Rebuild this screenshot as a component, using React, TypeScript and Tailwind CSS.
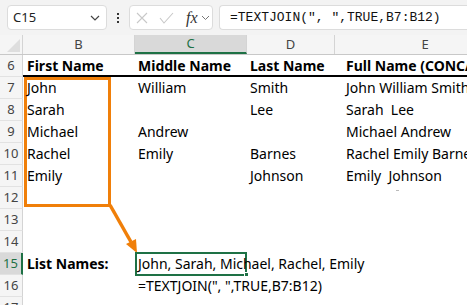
import React from "react";

const font = { fontFamily: "'Noto Sans', 'Open Sans', sans-serif" };

const rows: { n: number; b?: string; c?: string; d?: string; e?: string; bold?: boolean; boldB?: boolean }[] = [
  { n: 6, b: "First Name", c: "Middle Name", d: "Last Name", e: "Full Name (CONCAT)", bold: true },
  { n: 7, b: "John", c: "William", d: "Smith", e: "John William Smith" },
  { n: 8, b: "Sarah", d: "Lee", e: "Sarah  Lee" },
  { n: 9, b: "Michael", c: "Andrew", e: "Michael Andrew" },
  { n: 10, b: "Rachel", c: "Emily", d: "Barnes", e: "Rachel Emily Barnes" },
  { n: 11, b: "Emily", d: "Johnson", e: "Emily  Johnson" },
  { n: 12 },
  { n: 13 },
  { n: 14 },
  { n: 15, b: "List Names:", c: "John, Sarah, Michael, Rachel, Emily", boldB: true },
  { n: 16, c: '=TEXTJOIN(", ",TRUE,B7:B12)' },
  { n: 17 },
];

function Cell({ text, bold, w, indent }: { text?: string; bold?: boolean; w: string; indent?: string }) {
  return (
    <div className={`${w} shrink-0 relative h-full`}>
      {text && (
        <span
          className={`absolute ${indent ?? "left-[4px]"} top-[1px] whitespace-pre text-[14px] leading-[20px] text-black z-10 ${bold ? "font-bold" : ""}`}
        >
          {text}
        </span>
      )}
    </div>
  );
}

export default function App() {
  return (
    <div className="w-[467px] h-[305px] overflow-hidden bg-white relative" style={font}>
      {/* toolbar */}
      <div className="h-[35px] bg-[#f3f3f3] flex items-center pl-[7px] gap-0">
        <div className="w-[100px] h-[25px] bg-white border border-[#dcdcdc] rounded-[4px] flex items-center justify-between pl-[5px] pr-[6px]">
          <span className="text-[13px] text-[#222]">C15</span>
          <svg width="10" height="6" viewBox="0 0 10 6"><path d="M1 1l4 4 4-4" fill="none" stroke="#444" strokeWidth="1.2" /></svg>
        </div>
        <div className="w-[22px] flex flex-col items-center gap-[2px]">
          <div className="w-[2px] h-[2px] bg-[#333]" />
          <div className="w-[2px] h-[2px] bg-[#333]" />
          <div className="w-[2px] h-[2px] bg-[#333]" />
        </div>
        <div className="w-[84px] h-[25px] bg-white border border-[#dcdcdc] rounded-[4px] flex items-center pl-[5px]">
          <svg width="14" height="14" viewBox="0 0 14 14"><path d="M2 2l10 10M12 2L2 12" stroke="#c8c8c8" strokeWidth="1.1" fill="none" /></svg>
          <svg className="ml-[10px]" width="15" height="12" viewBox="0 0 15 12"><path d="M1 6l4 5 9-10" stroke="#c8c8c8" strokeWidth="1.1" fill="none" /></svg>
          <span className="ml-[12px] italic text-[16px] text-[#333] leading-none" style={{ fontFamily: "'Liberation Serif', serif" }}>fx</span>
          <svg className="ml-[3px]" width="9" height="6" viewBox="0 0 9 6"><path d="M1 1l3.5 3.5L8 1" fill="none" stroke="#777" strokeWidth="1" /></svg>
        </div>
        <div className="ml-[6px] flex-1 h-[25px] bg-white border border-[#dcdcdc] rounded-l-[4px] border-r-0 flex items-center pl-[10px]">
          <span className="text-[13px] text-[#111] whitespace-nowrap" style={{ fontFamily: "'Liberation Mono', monospace" }}>
            =TEXTJOIN(", ",TRUE,B7:B12)
          </span>
        </div>
      </div>

      {/* column headers */}
      <div className="h-[20px] flex bg-[#f5f5f5] border-b border-[#c8c8c8] text-[13px] text-[#444]">
        <div className="w-[23px] shrink-0 border-r border-[#d4d4d4] relative">
          <svg className="absolute right-[2px] bottom-[2px]" width="13" height="13" viewBox="0 0 13 13"><path d="M13 0V13H0Z" fill="#dedede" /></svg>
        </div>
        <div className="w-[112px] shrink-0 border-r border-[#d4d4d4] flex items-center justify-center">B</div>
        <div className="w-[112px] shrink-0 border-r border-[#d4d4d4] bg-[#d9d9d9] border-b-2 border-b-[#1e7145] flex items-center justify-center text-[#1e7145]">C</div>
        <div className="w-[88px] shrink-0 border-r border-[#d4d4d4] flex items-center justify-center">D</div>
        <div className="w-[180px] shrink-0 flex items-center justify-center">E</div>
      </div>

      {/* rows */}
      {rows.map((r) => (
        <div key={r.n} className="h-[22px] flex">
          <div
            className={`w-[23px] shrink-0 flex items-center justify-center text-[13px] border-b border-[#e2e2e2] ${
              r.n === 15 ? "bg-[#d9d9d9] text-[#1e7145] border-r-2 border-r-[#1e7145]" : "bg-[#f5f5f5] text-[#444] border-r border-r-[#d4d4d4]"
            }`}
          >
            {r.n}
          </div>
          <div className={`flex flex-1 h-full ${r.n === 6 ? "border-b-2 border-black" : ""}`}>
            <Cell w="w-[112px]" text={r.b} bold={r.bold || r.boldB} />
            <Cell w="w-[112px]" text={r.c} bold={r.bold} indent="left-[3px]" />
            <Cell w="w-[88px]" text={r.d} bold={r.bold} indent="left-[3px]" />
            <Cell w="w-[180px]" text={r.e} bold={r.bold} indent="left-[11px]" />
          </div>
        </div>
      ))}

      {/* small mark in row 12 */}
      <div className="absolute left-[396px] top-[190px] w-[3px] h-[1px] bg-[#bbbbbb]" />

      {/* orange highlight box */}
      <div className="absolute left-[24px] top-[77px] w-[87px] h-[130px] border-[3px] border-[#f07f09] pointer-events-none" />
      {/* arrow */}
      <svg className="absolute left-0 top-0 pointer-events-none" width="467" height="305">
        <line x1="110" y1="205" x2="131" y2="242" stroke="#f07f09" strokeWidth="3.5" />
        <path d="M137 253 L126 244 L136 239 Z" fill="#f07f09" />
      </svg>
      {/* selection */}
      <div className="absolute left-[135px] top-[252px] w-[112px] h-[24px] border-2 border-[#1e7145] pointer-events-none" />
      <div className="absolute left-[244px] top-[272px] w-[5px] h-[5px] bg-[#1e7145] border border-white" />
    </div>
  );
}
